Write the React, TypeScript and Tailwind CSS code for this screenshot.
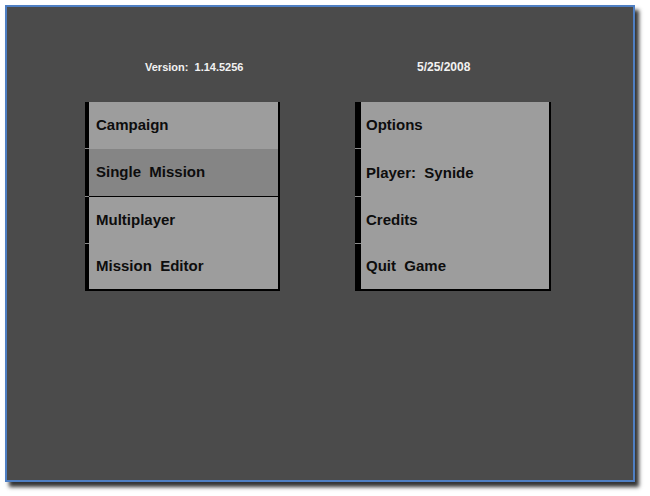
// Game launcher main menu: two button panels on a dark window.
const leftItems = [
  { label: "Campaign" },
  { label: "Single  Mission", active: true },
  { label: "Multiplayer" },
  { label: "Mission  Editor" },
];

const rightItems = [
  { label: "Options" },
  { label: "Player:  Synide" },
  { label: "Credits" },
  { label: "Quit  Game" },
];

type Item = { label: string; active?: boolean };

function MenuPanel({ items, bar, pad }: { items: Item[]; bar: string; pad: string }) {
  return (
    <div className="flex flex-col">
      {items.map((item, i) => (
        <div key={i} className={`flex ${i === 1 ? "h-[48px]" : "h-[47px]"}`}>
          <div className={`${bar} flex flex-col`}>
            <div className="flex-1 bg-black" />
            {i < items.length - 1 && <div className="h-px bg-[#8c8c8c]" />}
          </div>
          <div
            className={`flex flex-1 items-center border-r-2 border-black ${pad} ${
              item.active ? "border-b border-b-black bg-[#858585]" : "bg-[#9d9d9d]"
            } ${i === items.length - 1 ? "border-b-2 border-b-black" : ""}`}
          >
            <span className="whitespace-pre text-[15px] font-bold text-[#0d0d0d]">{item.label}</span>
          </div>
        </div>
      ))}
    </div>
  );
}

export default function App() {
  return (
    <div
      className="h-[496px] w-[650px] bg-white pl-[5px] pt-[5px]"
      style={{ fontFamily: '"Liberation Sans", Arial, sans-serif' }}
    >
      <div className="flex h-[477px] w-[630px] border-2 border-[#4f7fc3] bg-[#4b4b4b] pl-[78px] shadow-[4px_5px_4px_rgba(0,0,0,0.8)]">
        <div className="flex w-[195px] flex-col pt-[54px]">
          <div className="h-[13px] whitespace-pre pl-[60px] text-[11px] leading-[13px] font-bold text-[#f2f2f2]">
            Version:  1.14.5256
          </div>
          <div className="mt-[28px]">
            <MenuPanel items={leftItems} bar="w-[4px]" pad="pl-[7px]" />
          </div>
        </div>
        <div className="ml-[75px] flex w-[196px] flex-col pt-[53px]">
          <div className="h-[14px] whitespace-pre pl-[62px] text-[12px] leading-[14px] font-bold text-[#f2f2f2]">
            5/25/2008
          </div>
          <div className="mt-[28px]">
            <MenuPanel items={rightItems} bar="w-[6px]" pad="pl-[5px]" />
          </div>
        </div>
      </div>
    </div>
  );
}
